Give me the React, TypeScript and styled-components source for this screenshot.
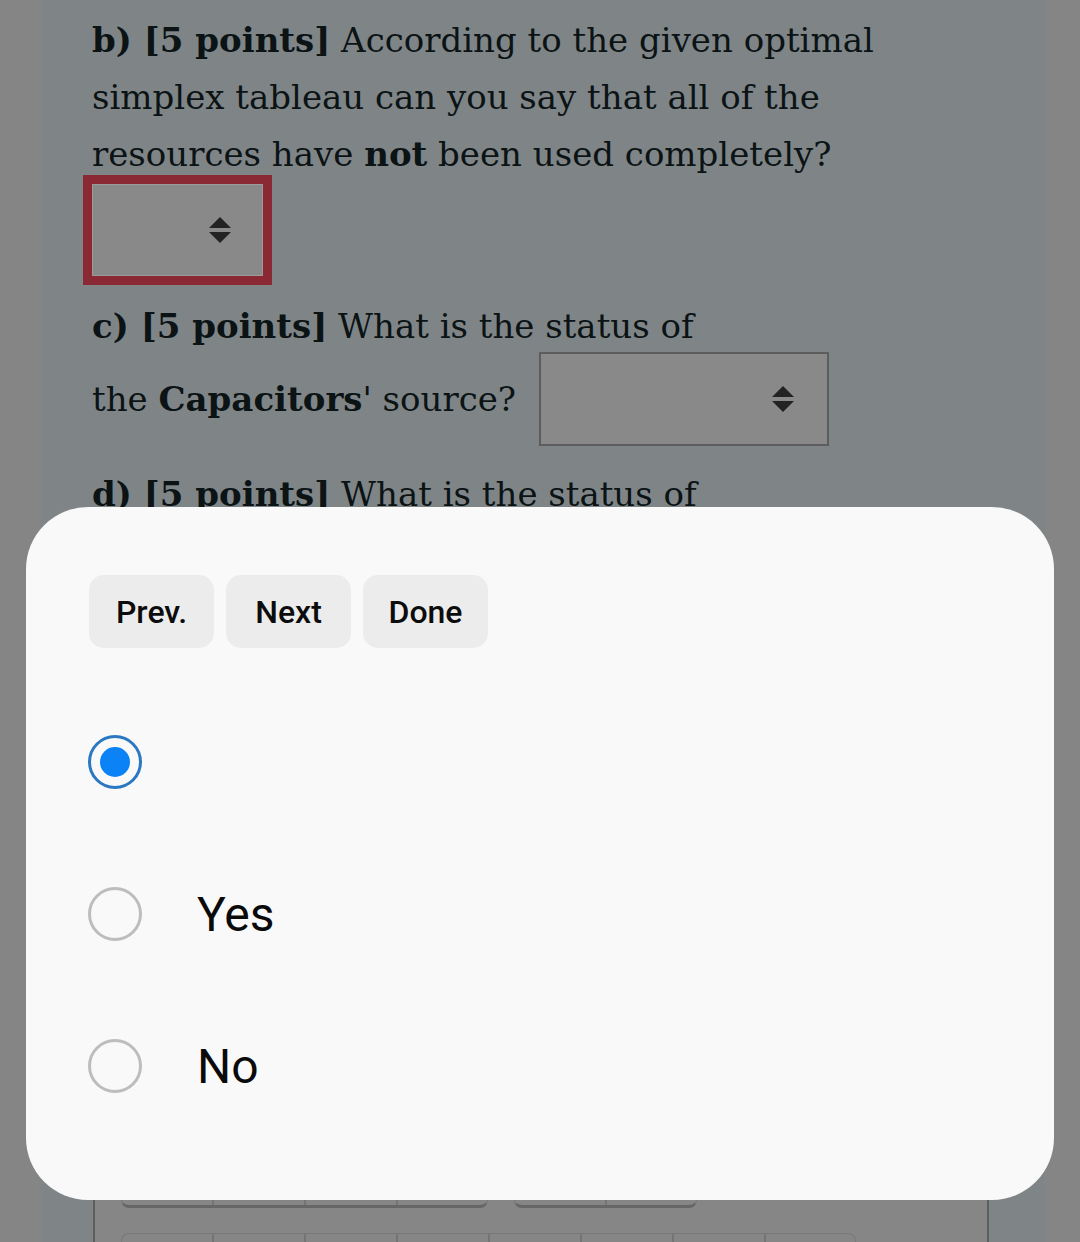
import React, { useState } from "react";
import styled, { createGlobalStyle } from "styled-components";

const GlobalStyle = createGlobalStyle`
  html, body {
    margin: 0;
    padding: 0;
  }

  body {
    background: #858585;
  }
`;

const options = ["", "Yes", "No"];

const SortArrows = () => (
  <svg width="22" height="26" viewBox="0 0 22 26">
    <path d="M11 0 L22 11 L0 11 Z" fill="#232323" />
    <path d="M0 15 L22 15 L11 26 Z" fill="#232323" />
  </svg>
);

const App = () => {
  const [selected, setSelected] = useState<number>(0);

  return (
    <>
      <GlobalStyle />
      <Page>
        <Content>
          <Question>
            <b>b) [5 points]</b> According to the given optimal
            <br />
            simplex tableau can you say that all of the
            <br />
            resources have <b>not</b> been used completely?
          </Question>
          <SelectBox $invalid>
            <SortArrows />
          </SelectBox>

          <Question style={{ marginTop: 22 }}>
            <b>c) [5 points]</b> What is the status of
          </Question>
          <InlineLine>
            <span>
              the <b>Capacitors</b>' source?
            </span>
            <SelectBox $wide>
              <SortArrows />
            </SelectBox>
          </InlineLine>

          <Question style={{ marginTop: 20 }}>
            <b>d) [5 points]</b> What is the status of
          </Question>

          <TableBox>
            <TileRow>
              <TileGroup $cells={4} />
              <TileGroup $cells={2} />
            </TileRow>
            <TileRow>
              <TileGroup $cells={8} />
            </TileRow>
          </TableBox>
        </Content>

        <Sheet>
          <ButtonRow>
            <ToolButton>Prev.</ToolButton>
            <ToolButton>Next</ToolButton>
            <ToolButton>Done</ToolButton>
          </ButtonRow>
          <OptionList>
            {options.map((label, i) => (
              <OptionRow key={i} onClick={() => setSelected(i)}>
                <Radio $checked={selected === i} />
                <OptionLabel>{label}</OptionLabel>
              </OptionRow>
            ))}
          </OptionList>
        </Sheet>
      </Page>
    </>
  );
};

export default App;

const Page = styled.div`
  position: relative;
  height: 1242px;
  overflow: hidden;
  padding-left: 41px;

  background: #858585;
`;

const Content = styled.div`
  box-sizing: border-box;
  width: 1004px;
  height: 100%;
  padding: 12px 0 0 51px;

  background: #7f8587;
  color: #0b1315;

  font-family: "DejaVu Serif", "Liberation Serif", serif;
  font-size: 34px;
  line-height: 57px;
`;

const Question = styled.p`
  margin: 0;

  b {
    font-weight: 700;
  }
`;

const InlineLine = styled.div`
  display: flex;
  align-items: center;
  gap: 23px;
  margin-top: -3px;

  b {
    font-weight: 700;
  }
`;

const SelectBox = styled.div<{ $invalid?: boolean; $wide?: boolean }>`
  box-sizing: border-box;
  display: flex;
  justify-content: flex-end;
  align-items: center;
  width: ${(p) => (p.$wide ? "290px" : "171px")};
  height: ${(p) => (p.$wide ? "94px" : "92px")};
  margin: ${(p) => (p.$invalid ? "1px 0 0 0" : "0")};
  padding-right: ${(p) => (p.$wide ? "33px" : "31px")};

  background: #898989;
  border: ${(p) => (p.$invalid ? "1px solid #9b9b9b" : "2px solid #5d5d5d")};
  box-shadow: ${(p) => (p.$invalid ? "0 0 0 9px #8a2834" : "none")};
`;

const TableBox = styled.div`
  box-sizing: border-box;
  width: 896px;
  height: 560px;
  margin: 621px 0 0 1px;
  padding: 0 0 0 26px;

  background: #868686;
  border-left: 2px solid #5e5e5e;
  border-right: 2px solid #5e5e5e;
`;

const TileRow = styled.div`
  display: flex;
  gap: 26px;
  margin-bottom: 25px;
`;

const TileGroup = styled.div<{ $cells: number }>`
  box-sizing: border-box;
  width: ${(p) => p.$cells * 92 - 1}px;
  height: 64px;

  background: repeating-linear-gradient(
    to right,
    transparent 0,
    transparent 90px,
    #747474 90px,
    #747474 92px
  );
  border: 1px solid #787878;
  border-bottom: 3px solid #666666;
  border-radius: 8px;
`;

const Sheet = styled.div`
  position: absolute;
  top: 507px;
  left: 26px;
  box-sizing: border-box;
  width: 1028px;
  height: 693px;
  padding: 68px 0 0 63px;

  background: #f9f9f9;
  border-radius: 62px;

  font-family: Roboto, "Noto Sans", sans-serif;
`;

const ButtonRow = styled.div`
  display: flex;
  gap: 12px;
`;

const ToolButton = styled.button`
  width: 125px;
  height: 73px;
  padding: 0;

  background: #ececec;
  border: none;
  border-radius: 15px;
  color: #0c0c0c;

  font-family: Roboto, "Noto Sans", sans-serif;
  font-size: 32px;
  font-weight: 500;
`;

const OptionList = styled.div`
  margin-top: 38px;
`;

const OptionRow = styled.div`
  display: flex;
  align-items: center;
  gap: 55px;
  height: 152px;
`;

const Radio = styled.span<{ $checked: boolean }>`
  box-sizing: border-box;
  display: flex;
  justify-content: center;
  align-items: center;
  width: 54px;
  height: 54px;
  margin-left: -1px;

  border: 3px solid ${(p) => (p.$checked ? "#2a78c2" : "#bdbdbd")};
  border-radius: 50%;

  &::after {
    content: "";
    display: ${(p) => (p.$checked ? "block" : "none")};
    width: 30px;
    height: 30px;

    background: #0b82f6;
    border-radius: 50%;
  }
`;

const OptionLabel = styled.span`
  color: #0a0a0a;

  font-size: 48px;
`;
